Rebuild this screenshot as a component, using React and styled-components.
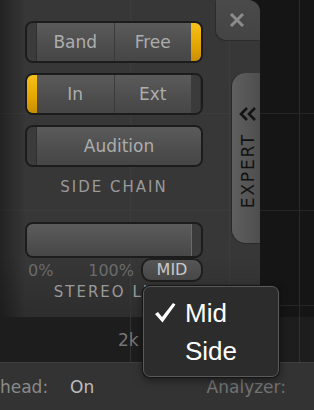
import React from 'react';
import styled, { createGlobalStyle } from 'styled-components';

const Global = createGlobalStyle`
  html, body { margin: 0; padding: 0; background: #161616; }
  * { box-sizing: border-box; }
`;

const UI = '"DejaVu Sans", "Liberation Sans", sans-serif';

const App = () => {
  return (
    <>
      <Global />
      <Screen>
        <Top>
          <Panel>
            <Controls>
              <Seg>
                <Lamp />
                <SegButton>Band</SegButton>
                <SegButton>Free</SegButton>
                <Lamp $on />
              </Seg>
              <Seg>
                <Lamp $on />
                <SegButton>In</SegButton>
                <SegButton>Ext</SegButton>
                <Lamp />
              </Seg>
              <Seg>
                <Lamp />
                <SegButton>Audition</SegButton>
              </Seg>
              <Caption>SIDE CHAIN</Caption>
              <Slider>
                <SliderFill />
                <SliderRest />
              </Slider>
              <SliderLegend>
                <Pct>0%</Pct>
                <Pct>100%</Pct>
                <Pill>MID</Pill>
              </SliderLegend>
              <Caption $bottom>STEREO LINK</Caption>
            </Controls>
            <Rail>
              <CloseTab>
                <svg width="16" height="16" viewBox="0 0 16 16">
                  <path d="M2 2 L14 14 M14 2 L2 14" stroke="#8c8c8c" strokeWidth="3" strokeLinecap="butt" />
                </svg>
              </CloseTab>
              <ExpertTab>
                <svg width="18" height="14" viewBox="0 0 18 14">
                  <path d="M8 1 L2 7 L8 13 M16 1 L10 7 L16 13" stroke="#141414" strokeWidth="2.6" fill="none" />
                </svg>
                <ExpertLabel>EXPERT</ExpertLabel>
              </ExpertTab>
            </Rail>
          </Panel>
        </Top>
        <Scale>
          <ScaleTick>2k</ScaleTick>
        </Scale>
        <StatusBar>
          <StatusKey $clip>Lookahead:</StatusKey>
          <StatusValue>On</StatusValue>
          <StatusKey $push>Analyzer:</StatusKey>
        </StatusBar>
        <Menu>
          <MenuItem>
            <Check viewBox="0 0 22 20" width="22" height="20">
              <path d="M1 11 L4 9 L8 14 L19 0 L21.5 1.5 L8.5 19.5 Z" fill="#fff" />
            </Check>
            Mid
          </MenuItem>
          <MenuItem>Side</MenuItem>
        </Menu>
      </Screen>
    </>
  );
};

export default App;

// STYLED COMPONENTS
const gridLine = (c) => `linear-gradient(${c}, ${c})`;

const Screen = styled.div`
  position: relative;
  width: 314px;
  height: 410px;
  overflow: hidden;
  display: flex;
  flex-direction: column;
  font-family: ${UI};
  background:
    ${gridLine('#2a2a2a')} 299px 0 / 1px 100% no-repeat,
    ${gridLine('#2a2a2a')} 130px 0 / 1px 100% no-repeat,
    ${gridLine('#262626')} 0 113px / 100% 1px no-repeat,
    ${gridLine('#262626')} 0 210px / 100% 1px no-repeat,
    ${gridLine('#262626')} 0 305px / 100% 1px no-repeat,
    #151515;
`;

const Top = styled.div`
  height: 317px;
  display: flex;
`;

const Panel = styled.div`
  width: 260px;
  display: flex;
  border-radius: 0 12px 3px 0;
  background:
    linear-gradient(90deg, rgba(0, 0, 0, 0.38), rgba(0, 0, 0, 0) 26px),
    linear-gradient(0deg, rgba(0, 0, 0, 0.18), rgba(0, 0, 0, 0) 60px),
    ${gridLine('#3d3d3d')} 130px 0 / 1px 100% no-repeat,
    ${gridLine('#3d3d3d')} 229px 0 / 1px 100% no-repeat,
    ${gridLine('#3c3c3c')} 0 113px / 100% 1px no-repeat,
    ${gridLine('#3c3c3c')} 0 210px / 100% 1px no-repeat,
    #373737;
`;

const Controls = styled.div`
  width: 216px;
  padding: 21px 13px 0 25px;
  display: flex;
  flex-direction: column;
  gap: 10px;
`;

const Seg = styled.div`
  display: flex;
  height: 42px;
  flex: none;
  border: 2px solid #1c1c1c;
  border-radius: 8px;
  overflow: hidden;
  background: #3a3a3a;
`;

const Lamp = styled.span`
  width: 10px;
  flex: none;
  background: ${(p) =>
    p.$on ? 'linear-gradient(180deg, #f7c019 0%, #e3a600 60%, #c98e00 100%)' : '#3b3b3b'};
  box-shadow: ${(p) => (p.$on ? 'none' : 'inset -1px 0 0 #303030')};
`;

const SegButton = styled.button`
  flex: 1;
  border: 0;
  padding: 0;
  background: linear-gradient(180deg, #5b5b5b 0%, #4e4e4e 55%, #464646 100%);
  color: #adadad;
  font-family: ${UI};
  font-size: 17px;
  & + & {
    border-left: 1px solid #3a3a3a;
  }
`;

const Caption = styled.div`
  margin: ${(p) => (p.$bottom ? '-10px' : '0')} 0 0;
  height: 20px;
  line-height: 20px;
  text-align: center;
  color: #9a9a9a;
  font-size: 15px;
  letter-spacing: 2px;
  white-space: nowrap;
`;

const Slider = styled.div`
  margin-top: 15px;
  height: 36px;
  flex: none;
  display: flex;
  border: 2px solid #1c1c1c;
  border-radius: 8px;
  overflow: hidden;
`;

const SliderFill = styled.div`
  flex: 1;
  background: linear-gradient(180deg, #5c5c5c 0%, #505050 55%, #474747 100%);
  box-shadow: inset -1px 0 0 #6a6a6a;
`;

const SliderRest = styled.div`
  width: 9px;
  background: #3b3b3b;
`;

const SliderLegend = styled.div`
  margin-top: -10px;
  height: 24px;
  display: flex;
  align-items: center;
  gap: 7px;
`;

const Pct = styled.span`
  color: #6b6b6b;
  font-size: 16px;
  &:first-child {
    margin-left: 3px;
    margin-right: auto;
  }
`;

const Pill = styled.span`
  width: 62px;
  height: 24px;
  border: 2px solid #1e1e1e;
  border-radius: 10px;
  background: linear-gradient(180deg, #555 0%, #474747 100%);
  color: #c8c8c8;
  font-size: 16px;
  text-align: center;
  line-height: 20px;
`;

const Rail = styled.div`
  width: 44px;
  display: flex;
  flex-direction: column;
  align-items: flex-end;
`;

const CloseTab = styled.div`
  width: 44px;
  height: 40px;
  display: flex;
  align-items: center;
  justify-content: center;
  padding-right: 3px;
  border-radius: 0 12px 0 10px;
  background: linear-gradient(180deg, #4a4a4a, #444);
  box-shadow: -1px 1px 0 #2c2c2c;
`;

const ExpertTab = styled.div`
  margin-top: 33px;
  width: 28px;
  height: 170px;
  display: flex;
  flex-direction: column;
  align-items: center;
  padding: 34px 0 0 3px;
  gap: 12px;
  border-radius: 14px 0 0 14px;
  background: linear-gradient(90deg, #5f5f5f 0%, #555 60%, #4d4d4d 100%);
  box-shadow: -1px 0 0 #2a2a2a, 0 1px 0 #2a2a2a;
`;

const ExpertLabel = styled.span`
  writing-mode: vertical-rl;
  transform: rotate(180deg);
  color: #111;
  font-size: 17px;
  letter-spacing: 1.8px;
`;

const Scale = styled.div`
  height: 45px;
  display: flex;
  align-items: center;
  padding-left: 118px;
  background: rgba(255, 255, 255, 0.035);
`;

const ScaleTick = styled.span`
  color: #757575;
  font-size: 17px;
`;

const StatusBar = styled.div`
  flex: 1;
  display: flex;
  align-items: center;
  gap: 22px;
  border-top: 1px solid #3e3e3e;
  background: #333;
  font-size: 17px;
`;

const StatusKey = styled.span`
  color: ${(p) => (p.$push ? '#727272' : '#8a8a8a')};
  margin-left: ${(p) => (p.$clip ? '-50px' : p.$push ? 'auto' : '0')};
  margin-right: ${(p) => (p.$push ? '28px' : '0')};
  white-space: nowrap;
`;

const StatusValue = styled.span`
  color: #bdbdbd;
`;

const Menu = styled.div`
  position: absolute;
  left: 143px;
  top: 286px;
  width: 136px;
  height: 91px;
  padding: 11px 0 0 41px;
  border: 1px solid #5a5a5a;
  border-radius: 7px;
  background: #2c2c2c;
  box-shadow: 0 0 0 1px #151515, 0 3px 8px rgba(0, 0, 0, 0.5);
  font-family: "Liberation Sans", Arial, sans-serif;
`;

const MenuItem = styled.div`
  position: relative;
  height: 38px;
  line-height: 30px;
  color: #fff;
  font-size: 26px;
`;

const Check = styled.svg`
  position: absolute;
  left: -31px;
  top: 5px;
`;
